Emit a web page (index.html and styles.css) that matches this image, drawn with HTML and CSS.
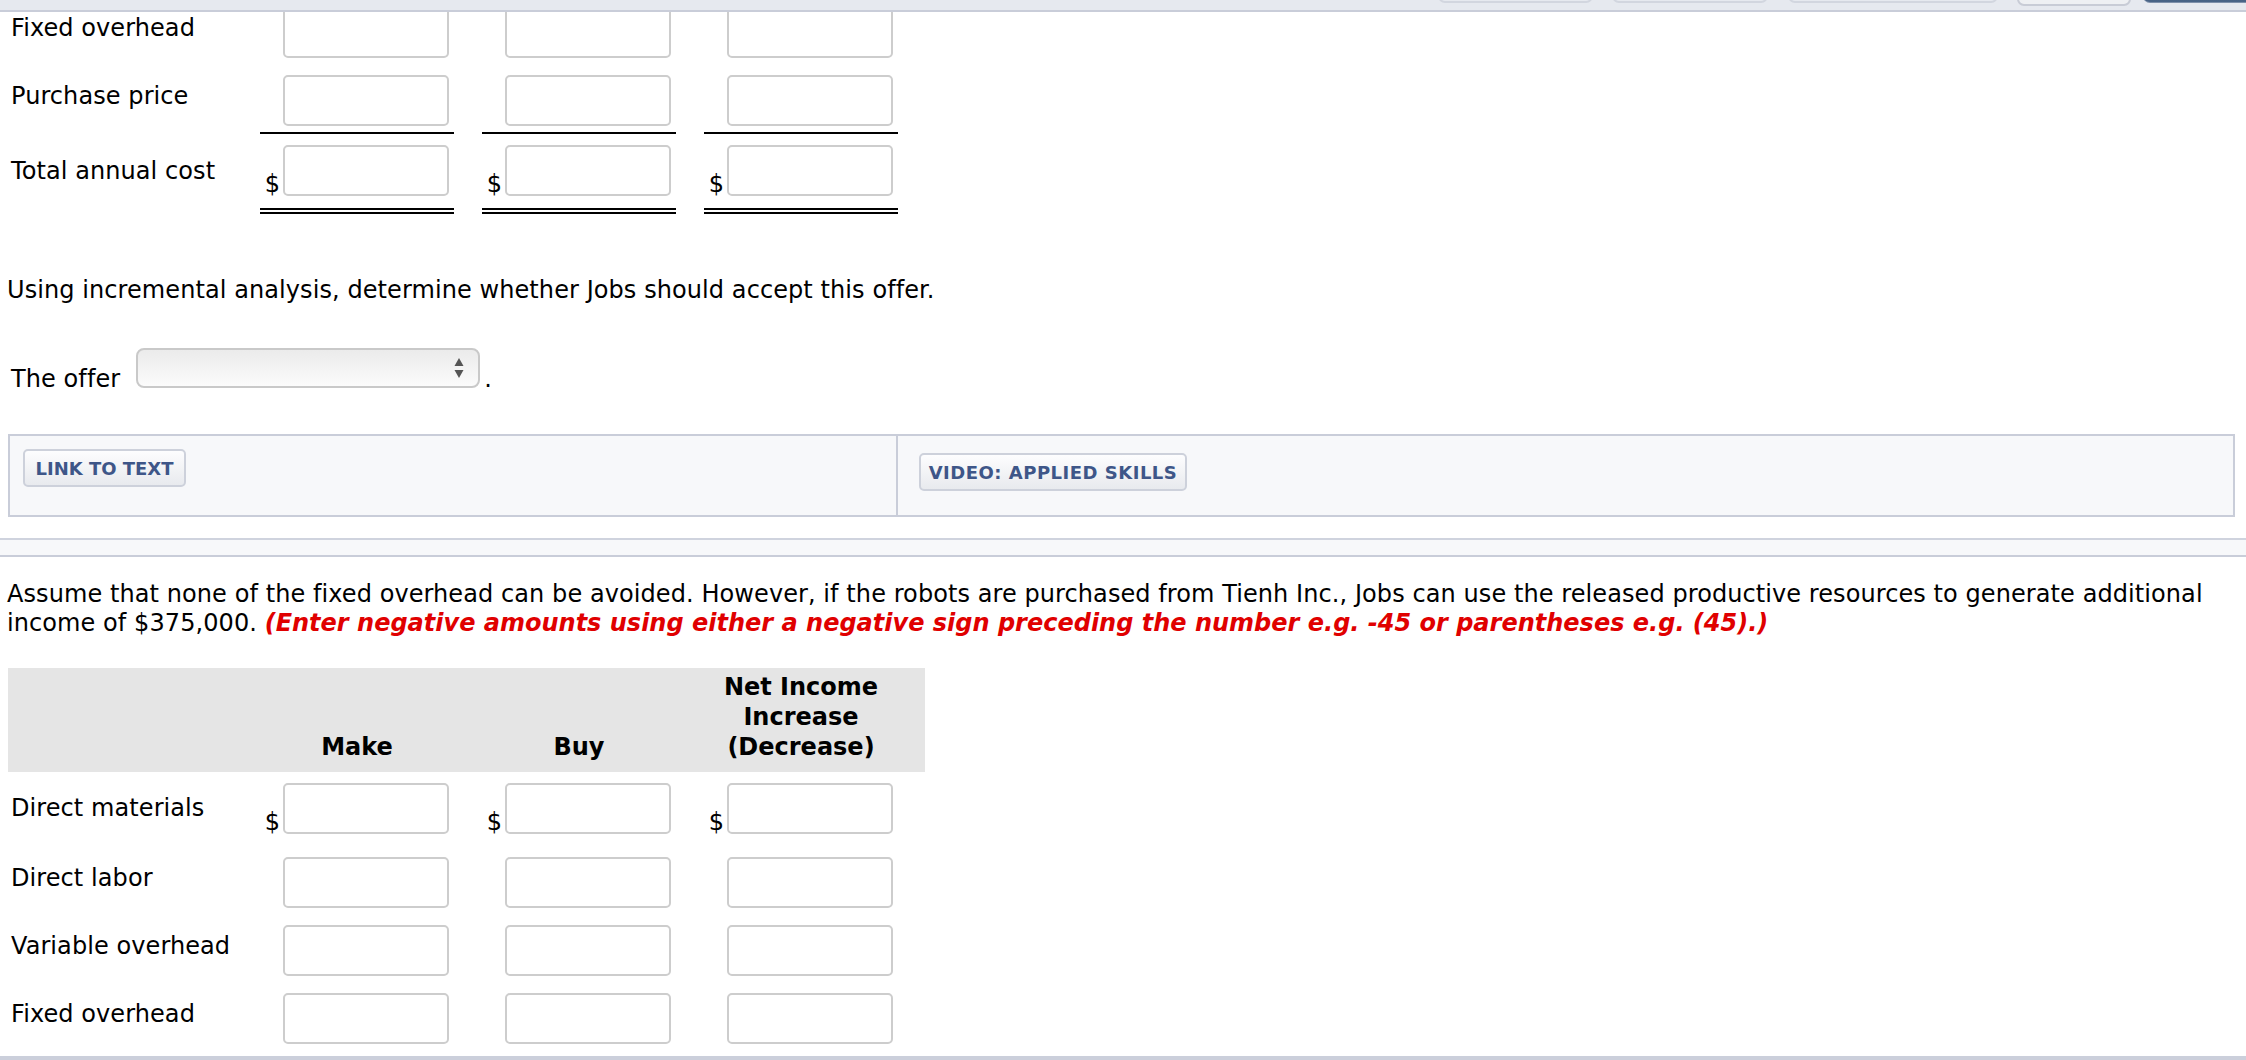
FILE: index.html
```html
<!DOCTYPE html>
<html>
<head>
<meta charset="utf-8">
<title>Make or Buy</title>
<link rel="stylesheet" href="styles.css">
</head>
<body>
<div class="topbar">
  <span class="tb tb1"></span>
  <span class="tb tb2"></span>
  <span class="tb tb3"></span>
  <span class="tb tb4"></span>
  <span class="tb tb5"></span>
</div>

<div class="sheet sheet-top">
  <div class="row r-a">
    <div class="lbl">Fixed overhead</div>
    <div class="val"><span class="cur"></span><input class="inp" type="text"></div>
    <div class="val"><span class="cur"></span><input class="inp" type="text"></div>
    <div class="val"><span class="cur"></span><input class="inp" type="text"></div>
  </div>
  <div class="row r-b">
    <div class="lbl">Purchase price</div>
    <div class="val"><span class="cur"></span><input class="inp" type="text"></div>
    <div class="val"><span class="cur"></span><input class="inp" type="text"></div>
    <div class="val"><span class="cur"></span><input class="inp" type="text"></div>
  </div>
  <div class="row r-c">
    <div class="lbl">Total annual cost</div>
    <div class="val"><span class="cur">$</span><input class="inp" type="text"></div>
    <div class="val"><span class="cur">$</span><input class="inp" type="text"></div>
    <div class="val"><span class="cur">$</span><input class="inp" type="text"></div>
  </div>
</div>

<p class="q">Using incremental analysis, determine whether Jobs should accept this offer.</p>

<div class="offer">
  <span class="offer-lbl">The offer</span>
  <span class="select">
    <svg class="arrows" width="10" height="20" viewBox="0 0 10 20"><path d="M5 0 L9.5 8 L0.5 8 Z M0.5 12 L9.5 12 L5 20 Z" fill="#555"/></svg>
  </span>
  <span class="dot">.</span>
</div>

<div class="links">
  <div class="lcell"><span class="btn btn-link">LINK TO TEXT</span></div>
  <div class="lcell lcell-r"><span class="btn btn-video">VIDEO: APPLIED SKILLS</span></div>
</div>

<div class="sep"></div>

<p class="q q2">Assume that none of the fixed overhead can be avoided. However, if the robots are purchased from Tienh Inc., Jobs can use the released productive resources to generate additional<br>income of $375,000. <em class="hint">(Enter negative amounts using either a negative sign preceding the number e.g. -45 or parentheses e.g. (45).)</em></p>

<div class="sheet sheet-bottom">
  <div class="row head">
    <div class="hd"></div>
    <div class="hd">Make</div>
    <div class="hd">Buy</div>
    <div class="hd">Net Income<br>Increase<br>(Decrease)</div>
  </div>
  <div class="row r-dm">
    <div class="lbl">Direct materials</div>
    <div class="val"><span class="cur">$</span><input class="inp" type="text"></div>
    <div class="val"><span class="cur">$</span><input class="inp" type="text"></div>
    <div class="val"><span class="cur">$</span><input class="inp" type="text"></div>
  </div>
  <div class="row r-n">
    <div class="lbl">Direct labor</div>
    <div class="val"><span class="cur"></span><input class="inp" type="text"></div>
    <div class="val"><span class="cur"></span><input class="inp" type="text"></div>
    <div class="val"><span class="cur"></span><input class="inp" type="text"></div>
  </div>
  <div class="row r-n">
    <div class="lbl">Variable overhead</div>
    <div class="val"><span class="cur"></span><input class="inp" type="text"></div>
    <div class="val"><span class="cur"></span><input class="inp" type="text"></div>
    <div class="val"><span class="cur"></span><input class="inp" type="text"></div>
  </div>
  <div class="row r-n">
    <div class="lbl">Fixed overhead</div>
    <div class="val"><span class="cur"></span><input class="inp" type="text"></div>
    <div class="val"><span class="cur"></span><input class="inp" type="text"></div>
    <div class="val"><span class="cur"></span><input class="inp" type="text"></div>
  </div>
</div>

<div class="sep-bottom"></div>
</body>
</html>
```

FILE: styles.css
```css
html, body {
  margin: 0;
  padding: 0;
  background: #fff;
}
body {
  font-family: "DejaVu Sans", Verdana, sans-serif;
  font-size: 24px;
  letter-spacing: 0.08px;
  color: #000;
  overflow: hidden;
}

/* top toolbar (fixed, overlays scrolled content) */
.topbar {
  position: fixed;
  top: 0;
  left: 0;
  right: 0;
  height: 10px;
  background: #e6e9ef;
  border-bottom: 2px solid #c9cdd9;
  z-index: 10;
  overflow: hidden;
  display: flex;
  justify-content: flex-end;
  align-items: flex-start;
}
.tb {
  display: block;
  height: 30px;
  margin-top: -27px;
  box-sizing: border-box;
  border: 2px solid #d2d6df;
  border-radius: 7px;
  background: #e6e9ef;
}
.tb1 { width: 155px; }
.tb2 { width: 156px; margin-left: 19px; }
.tb3 { width: 210px; margin-left: 20px; }
.tb4 { width: 114px; margin-left: 19px; margin-top: -24px; background: #eef0f3; border-color: #c8ccd6; }
.tb5 {
  width: 113px;
  margin-left: 12px;
  margin-right: -10px;
  border: none;
  border-bottom: 1px solid #7e90aa;
  background: linear-gradient(#2c4768, #4a6587);
}

/* answer tables */
.sheet {
  margin-left: 8px;
  width: 917px;
}
.sheet-top {
  margin-top: -2px;
}
.row {
  display: grid;
  grid-template-columns: 238px repeat(3, 222px) 1fr;
}
.lbl {
  padding-left: 3px;
  line-height: 29px;
  padding-top: 16px;
  white-space: nowrap;
}
.val {
  margin: 0 14px;
  display: flex;
  align-items: flex-end;
  padding-top: 9px;
  padding-bottom: 8px;
}
.cur {
  width: 20px;
  padding-right: 3px;
  text-align: right;
  line-height: 24px;
  flex: none;
}
.inp {
  display: block;
  width: 166px;
  height: 51px;
  box-sizing: border-box;
  border: 2px solid #cdcdcd;
  border-radius: 5px;
  background: #fff;
  margin: 0;
  padding: 0 6px;
  font: inherit;
  outline: none;
}

.r-b .val {
  padding-bottom: 6px;
  border-bottom: 2px solid #000;
}
.r-c .lbl { padding-top: 23px; }
.r-c .val {
  padding-top: 11px;
  padding-bottom: 12px;
  border-bottom: 6px double #000;
}

.head {
  background: #e5e5e5;
  padding-top: 4px;
  padding-bottom: 10px;
}
.hd {
  font-weight: bold;
  letter-spacing: 0;
  line-height: 30px;
  text-align: center;
  align-self: end;
}
.r-dm .lbl { padding-top: 22px; }
.r-dm .val {
  padding-top: 11px;
  padding-bottom: 14px;
}

/* text */
.q {
  margin: 62px 0 0 0;
  padding-left: 7px;
  line-height: 29px;
}
.q2 {
  margin-top: 23px;
  padding-right: 8px;
  white-space: nowrap;
}
.hint {
  color: #e00000;
  font-weight: bold;
  font-style: italic;
  letter-spacing: 0;
}

/* offer dropdown */
.offer {
  margin-top: 43px;
  padding-left: 11px;
  display: flex;
  align-items: flex-end;
}
.offer-lbl {
  line-height: 29px;
  margin-bottom: -6px;
}
.select {
  margin-left: 16px;
  width: 344px;
  height: 40px;
  box-sizing: border-box;
  border: 2px solid #c9c9c9;
  border-radius: 8px;
  background: linear-gradient(#ebebeb, #fbfbfb);
  display: flex;
  align-items: center;
  justify-content: flex-end;
  padding-right: 14px;
}
.arrows { display: block; }
.dot {
  line-height: 29px;
  margin-bottom: -6px;
  margin-left: 4px;
}

/* link panel */
.links {
  margin: 46px 11px 0 8px;
  height: 83px;
  box-sizing: border-box;
  border: 2px solid #c9cdd9;
  background: #f7f8fa;
  display: grid;
  grid-template-columns: 886px 1fr;
}
.lcell {
  padding: 13px 0 0 13px;
}
.lcell-r {
  border-left: 2px solid #c9cdd9;
  padding: 17px 0 0 21px;
}
.btn {
  display: inline-flex;
  align-items: center;
  justify-content: center;
  height: 38px;
  box-sizing: border-box;
  border: 2px solid #cdd1db;
  border-radius: 5px;
  background: linear-gradient(#fdfdfe, #e8eaee);
  color: #3e5688;
  font-weight: bold;
  font-size: 18px;
  white-space: nowrap;
}
.btn-link {
  width: 163px;
  letter-spacing: 0;
}
.btn-video {
  width: 268px;
  letter-spacing: 0.5px;
}

/* separators */
.sep {
  margin-top: 21px;
  height: 15px;
  border-top: 2px solid #cfd3de;
  border-bottom: 2px solid #c9cdd9;
  background: #f7f8fa;
}
.sheet-bottom {
  margin-top: 30px;
}
.sep-bottom {
  margin-top: 4px;
  height: 8px;
  background: #cbcfdb;
}
```
